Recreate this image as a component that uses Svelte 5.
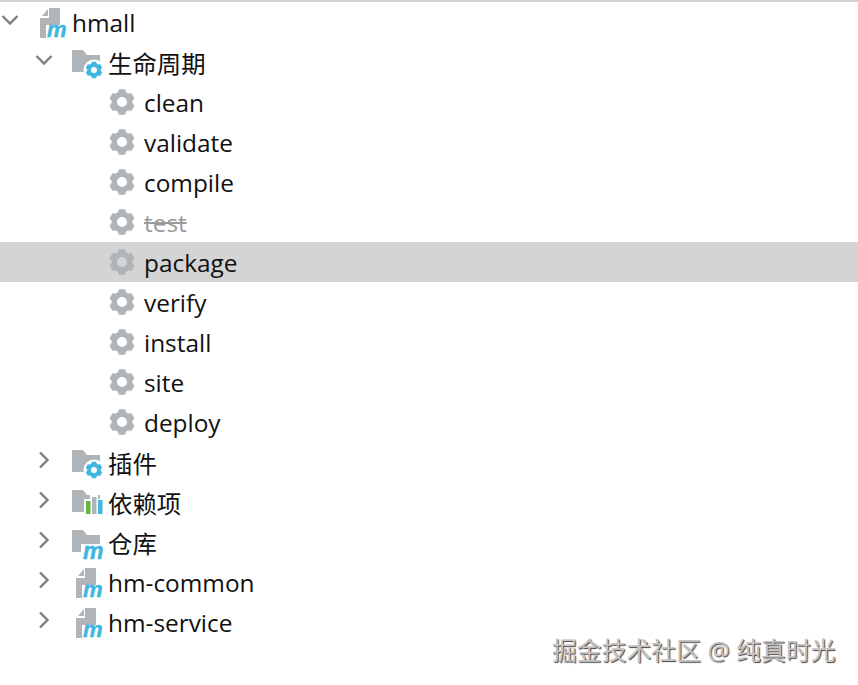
<script>
	// Maven tool window tree
	const rows = [
		{ label: 'hmall', depth: 0, arrow: 'down', icon: 'module' },
		{ label: '生命周期', depth: 1, arrow: 'down', icon: 'lifecycle' },
		{ label: 'clean', depth: 2, icon: 'gear' },
		{ label: 'validate', depth: 2, icon: 'gear' },
		{ label: 'compile', depth: 2, icon: 'gear' },
		{ label: 'test', depth: 2, icon: 'gear', skipped: true },
		{ label: 'package', depth: 2, icon: 'gear', selected: true },
		{ label: 'verify', depth: 2, icon: 'gear' },
		{ label: 'install', depth: 2, icon: 'gear' },
		{ label: 'site', depth: 2, icon: 'gear' },
		{ label: 'deploy', depth: 2, icon: 'gear' },
		{ label: '插件', depth: 1, arrow: 'right', icon: 'lifecycle' },
		{ label: '依赖项', depth: 1, arrow: 'right', icon: 'deps' },
		{ label: '仓库', depth: 1, arrow: 'right', icon: 'repo' },
		{ label: 'hm-common', depth: 1, arrow: 'right', icon: 'submodule' },
		{ label: 'hm-service', depth: 1, arrow: 'right', icon: 'submodule' }
	];

	// six-tooth gear with a round hole, use with fill-rule evenodd
	function gearPath(cx, cy, r, hole) {
		const point = (deg, radius) => {
			const a = (deg * Math.PI) / 180;
			return `${(cx + radius * Math.cos(a)).toFixed(2)} ${(cy + radius * Math.sin(a)).toFixed(2)}`;
		};
		const pts = [];
		for (let k = 0; k < 6; k++) {
			const a = -90 + 60 * k;
			pts.push(point(a - 25, r * 0.8), point(a - 13, r), point(a + 13, r), point(a + 25, r * 0.8));
		}
		return (
			`M${pts.join('L')}Z` +
			`M${cx - hole} ${cy}a${hole} ${hole} 0 1 0 ${hole * 2} 0a${hole} ${hole} 0 1 0 ${-hole * 2} 0Z`
		);
	}

	const taskGear = gearPath(13, 13, 13, 5);
	const badgeGear = gearPath(23, 28, 8.5, 3);
</script>

{#snippet folder()}
	<path class="grey" d="M1 8h11l4 5h13v17H1z" />
{/snippet}

<main class="tree">
	{#each rows as row (row.label)}
		<div class="row depth-{row.depth} {row.icon}" class:selected={row.selected}>
			{#if row.arrow}
				<svg class="arrow" width="20" height="20" viewBox="0 0 20 20">
					{#if row.arrow === 'down'}
						<path d="M2.5 6l7.5 7.5L17.5 6" />
					{:else}
						<path d="M6 2.5l7.5 7.5L6 17.5" />
					{/if}
				</svg>
			{/if}

			{#if row.icon === 'gear'}
				<svg class="icon" width="26" height="26" viewBox="0 0 26 26">
					<path class="grey" fill-rule="evenodd" d={taskGear} />
				</svg>
			{:else if row.icon === 'lifecycle'}
				<svg class="icon" width="32" height="40" viewBox="0 0 32 40">
					{@render folder()}
					<circle cx="23" cy="28" r="10.5" fill="#fff" />
					<path class="blue" fill-rule="evenodd" d={badgeGear} />
				</svg>
			{:else if row.icon === 'deps'}
				<svg class="icon" width="32" height="40" viewBox="0 0 32 40">
					{@render folder()}
					<rect x="13" y="17" width="20" height="17" fill="#fff" />
					<rect x="19" y="13" width="8" height="6" fill="#fff" />
					<rect x="15" y="19" width="4.5" height="13" fill="#62b543" />
					<rect class="grey" x="21" y="15" width="4.5" height="17" />
					<rect class="blue" x="27" y="18" width="4.5" height="14" />
				</svg>
			{:else if row.icon === 'repo'}
				<svg class="icon" width="32" height="40" viewBox="0 0 32 40">
					{@render folder()}
					<rect x="10" y="22" width="22" height="17" fill="#fff" />
					<text class="mark" x="12" y="37" font-size="23">m</text>
				</svg>
			{:else}
				<svg class="icon" width="28" height="40" viewBox="0 0 28 40">
					<path class="grey" d="M10 6h11v17H10z" />
					<path class="grey" d="M9 7v7H3z" />
					<path class="grey" d="M1 16h10v20H1z" />
					<rect x="7" y="23" width="21" height="15" fill="#fff" />
					<text class="mark" x="8" y="35" font-size="22">m</text>
				</svg>
			{/if}

			<span class="label" class:skipped={row.skipped}>{row.label}</span>
		</div>
	{/each}

	<div class="watermark">掘金技术社区 @ 纯真时光</div>
</main>

<style>
	:global(body) {
		background: #fff;
	}

	.tree {
		position: relative;
		box-sizing: border-box;
		width: 858px;
		height: 685px;
		overflow: hidden;
		border-top: 2px solid #d2d2d2;
		font-family: 'Open Sans', 'Noto Sans CJK SC', sans-serif;
		font-size: 24.4px;
		color: #111;
	}

	.row {
		position: relative;
		display: flex;
		align-items: center;
		height: 40px;
	}

	.selected {
		background: #d4d4d4;
	}

	.arrow {
		position: absolute;
		top: 8px;
		fill: none;
		stroke: #7f7f7f;
		stroke-width: 2.4;
	}

	.depth-0 .arrow {
		left: 0;
	}

	.depth-1 .arrow {
		left: 34px;
	}

	.depth-0 {
		padding-left: 39px;
	}

	.depth-1 {
		padding-left: 71px;
	}

	.depth-2 {
		padding-left: 109px;
	}

	.submodule {
		padding-left: 75px;
	}

	.icon {
		flex: none;
		overflow: visible;
	}

	.grey {
		fill: #afb4b9;
	}

	.blue {
		fill: #40b6e0;
	}

	.mark {
		fill: #40b6e0;
		stroke: #40b6e0;
		stroke-width: 0.5;
		font-family: 'Liberation Sans', sans-serif;
		font-weight: 700;
		font-style: italic;
	}

	.label {
		margin-left: 5px;
		white-space: nowrap;
	}

	.depth-2 .label {
		margin-left: 9px;
	}

	.skipped {
		color: #9a9a9a;
		text-decoration: line-through;
	}

	.watermark {
		position: absolute;
		left: 552px;
		top: 631px;
		font-size: 24.85px;
		line-height: 34px;
		white-space: nowrap;
		color: #c4c4c4;
		text-shadow: 1px 1px 1px #444;
	}
</style>
